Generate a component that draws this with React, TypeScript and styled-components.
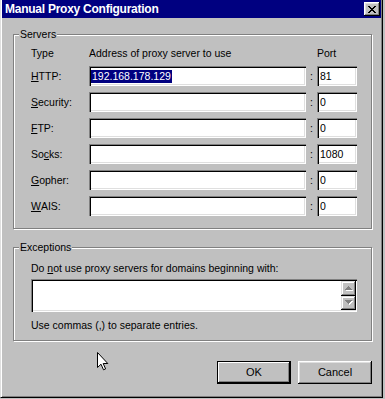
import React from "react";
import styled, { createGlobalStyle } from "styled-components";

const GlobalStyle = createGlobalStyle`
  html, body {
    margin: 0;
    padding: 0;
    background: #c0c0c0;
  }
  body {
    font-family: "Liberation Sans", Arial, sans-serif;
    font-size: 10.5px;
    line-height: 13px;
    color: #000;
  }
`;

const Window = styled.div`
  position: relative;
  box-sizing: border-box;
  width: 383px;
  height: 398px;
  background: #c0c0c0;
  border-left: 1px solid #dfdfdf;
  border-right: 1px solid #000;
  border-bottom: 1px solid #000;
  box-shadow: inset 1px 0 #fff, inset -1px -1px #808080;
  padding: 0 1px 2px 1px;
  display: flex;
  flex-direction: column;
`;

const TitleBar = styled.div`
  height: 18px;
  background: #000080;
  display: flex;
  align-items: center;
  justify-content: space-between;
  padding: 0 1px 0 3px;
`;

const Title = styled.span`
  color: #fff;
  font-weight: bold;
  font-size: 12px;
  letter-spacing: -0.25px;
`;

const CloseButton = styled.div`
  width: 16px;
  height: 14px;
  background: #c0c0c0;
  display: flex;
  align-items: center;
  justify-content: center;
  box-shadow: inset -1px -1px #000, inset 1px 1px #fff, inset -2px -2px #808080,
    inset 2px 2px #dfdfdf;
`;

const Content = styled.div`
  padding: 10px 9px 0 11px;
  display: flex;
  flex-direction: column;
`;

const Group = styled.fieldset<{ $gap?: number }>`
  margin: ${(p) => p.$gap ?? 0}px 0 0 0;
  padding: 0;
  min-width: 0;
  border: 1px solid #808080;
  box-shadow: inset 1px 1px #fff, 1px 1px #fff;
`;

const Legend = styled.legend`
  margin-left: 5px;
  padding: 0 1px;
  line-height: 13px;
  background: #c0c0c0;
`;

const ServerGrid = styled.div`
  display: grid;
  grid-template-columns: 58px 217px 11px 40px;
  grid-template-rows: 13px;
  grid-auto-rows: 20px;
  row-gap: 6px;
  padding: 6px 0 12px 17px;
`;

const Cell = styled.div<{ $center?: boolean }>`
  display: flex;
  align-items: center;
  justify-content: ${(p) => (p.$center ? "center" : "flex-start")};
  white-space: nowrap;
`;

const Field = styled.div`
  box-sizing: border-box;
  height: 20px;
  background: #fff;
  display: flex;
  align-items: center;
  padding-left: 3px;
  box-shadow: inset 1px 1px #808080, inset 2px 2px #000, inset -1px -1px #fff,
    inset -2px -2px #dfdfdf;
`;

const Selected = styled.span`
  background: #000080;
  color: #fff;
  margin-left: -1px;
  padding: 0 1px;
`;

const Key = styled.span`
  text-decoration: underline;
`;

const ExceptionBody = styled.div`
  display: flex;
  flex-direction: column;
  padding: 8px 13px 8px 17px;
`;

const ListBox = styled.div`
  box-sizing: border-box;
  width: 326px;
  height: 33px;
  margin: 4px 0 7px;
  background: #fff;
  display: flex;
  justify-content: flex-end;
  padding: 2px 1px 2px 2px;
  box-shadow: inset 1px 1px #808080, inset 2px 2px #000, inset -1px -1px #fff,
    inset -2px -2px #dfdfdf;
`;

const ScrollBar = styled.div`
  width: 15px;
  display: flex;
  flex-direction: column;
`;

const ScrollButton = styled.div`
  flex: 1;
  background: #c0c0c0;
  display: flex;
  align-items: center;
  justify-content: center;
  box-shadow: inset -1px -1px #000, inset 1px 1px #dfdfdf, inset -2px -2px #808080,
    inset 2px 2px #fff;
`;

const ButtonRow = styled.div`
  display: flex;
  justify-content: flex-end;
  gap: 7px;
  margin-top: 20px;
`;

const Button = styled.div<{ $default?: boolean }>`
  box-sizing: border-box;
  width: 74px;
  height: 23px;
  display: flex;
  align-items: center;
  justify-content: center;
  background: #c0c0c0;
  font-size: 11px;
  border: ${(p) => (p.$default ? "1px solid #000" : "none")};
  box-shadow: ${(p) =>
    p.$default
      ? "inset -1px -1px #000, inset 1px 1px #fff, inset -2px -2px #808080"
      : "inset -1px -1px #000, inset 1px 1px #fff, inset -2px -2px #808080, inset 2px 2px #dfdfdf"};
`;

const Cursor = styled.svg`
  position: absolute;
  left: 96px;
  top: 352px;
`;

const CloseIcon = () => (
  <svg width="8" height="7" viewBox="0 0 8 7" shapeRendering="crispEdges">
    <path
      d="M0 0h2v1H0z M6 0h2v1H6z M1 1h2v1H1z M5 1h2v1H5z M2 2h4v1H2z M3 3h2v1H3z M2 4h4v1H2z M1 5h2v1H1z M5 5h2v1H5z M0 6h2v1H0z M6 6h2v1H6z"
      fill="#000"
    />
  </svg>
);

const Arrow: React.FC<{ down?: boolean }> = ({ down }) => {
  const d = down
    ? "M0 0h7v1H0z M1 1h5v1H1z M2 2h3v1H2z M3 3h1v1H3z"
    : "M3 0h1v1H3z M2 1h3v1H2z M1 2h5v1H1z M0 3h7v1H0z";
  return (
    <svg width="8" height="5" viewBox="0 0 8 5" shapeRendering="crispEdges">
      <path d={d} fill="#fff" transform="translate(1 1)" />
      <path d={d} fill="#808080" />
    </svg>
  );
};

const rows: { label: React.ReactNode; address?: string; port: string }[] = [
  { label: <><Key>H</Key>TTP:</>, address: "192.168.178.129", port: "81" },
  { label: <><Key>S</Key>ecurity:</>, port: "0" },
  { label: <><Key>F</Key>TP:</>, port: "0" },
  { label: <>So<Key>c</Key>ks:</>, port: "1080" },
  { label: <><Key>G</Key>opher:</>, port: "0" },
  { label: <><Key>W</Key>AIS:</>, port: "0" },
];

const App: React.FC = () => {
  return (
    <>
      <GlobalStyle />
      <Window>
        <TitleBar>
          <Title>Manual Proxy Configuration</Title>
          <CloseButton>
            <CloseIcon />
          </CloseButton>
        </TitleBar>
        <Content>
          <Group>
            <Legend>Servers</Legend>
            <ServerGrid>
              <Cell>Type</Cell>
              <Cell>Address of proxy server to use</Cell>
              <Cell />
              <Cell>Port</Cell>
              {rows.map((row, index) => (
                <React.Fragment key={index}>
                  <Cell>{row.label}</Cell>
                  <Field>{row.address && <Selected>{row.address}</Selected>}</Field>
                  <Cell $center>:</Cell>
                  <Field>{row.port}</Field>
                </React.Fragment>
              ))}
            </ServerGrid>
          </Group>
          <Group $gap={12}>
            <Legend>Exceptions</Legend>
            <ExceptionBody>
              <div>
                Do <Key>n</Key>ot use proxy servers for domains beginning with:
              </div>
              <ListBox>
                <ScrollBar>
                  <ScrollButton>
                    <Arrow />
                  </ScrollButton>
                  <ScrollButton>
                    <Arrow down />
                  </ScrollButton>
                </ScrollBar>
              </ListBox>
              <div>Use commas (,) to separate entries.</div>
            </ExceptionBody>
          </Group>
          <ButtonRow>
            <Button $default>OK</Button>
            <Button>Cancel</Button>
          </ButtonRow>
        </Content>
        <Cursor width="12" height="19" viewBox="0 0 12 19">
          <path
            d="M0.5 0.5 L0.5 15.5 L4 12.2 L6.5 17.8 L8.6 16.9 L6.2 11.5 L10.8 11.5 Z"
            fill="#fff"
            stroke="#000"
            strokeWidth="1"
            strokeLinejoin="miter"
          />
        </Cursor>
      </Window>
    </>
  );
};

export default App;
